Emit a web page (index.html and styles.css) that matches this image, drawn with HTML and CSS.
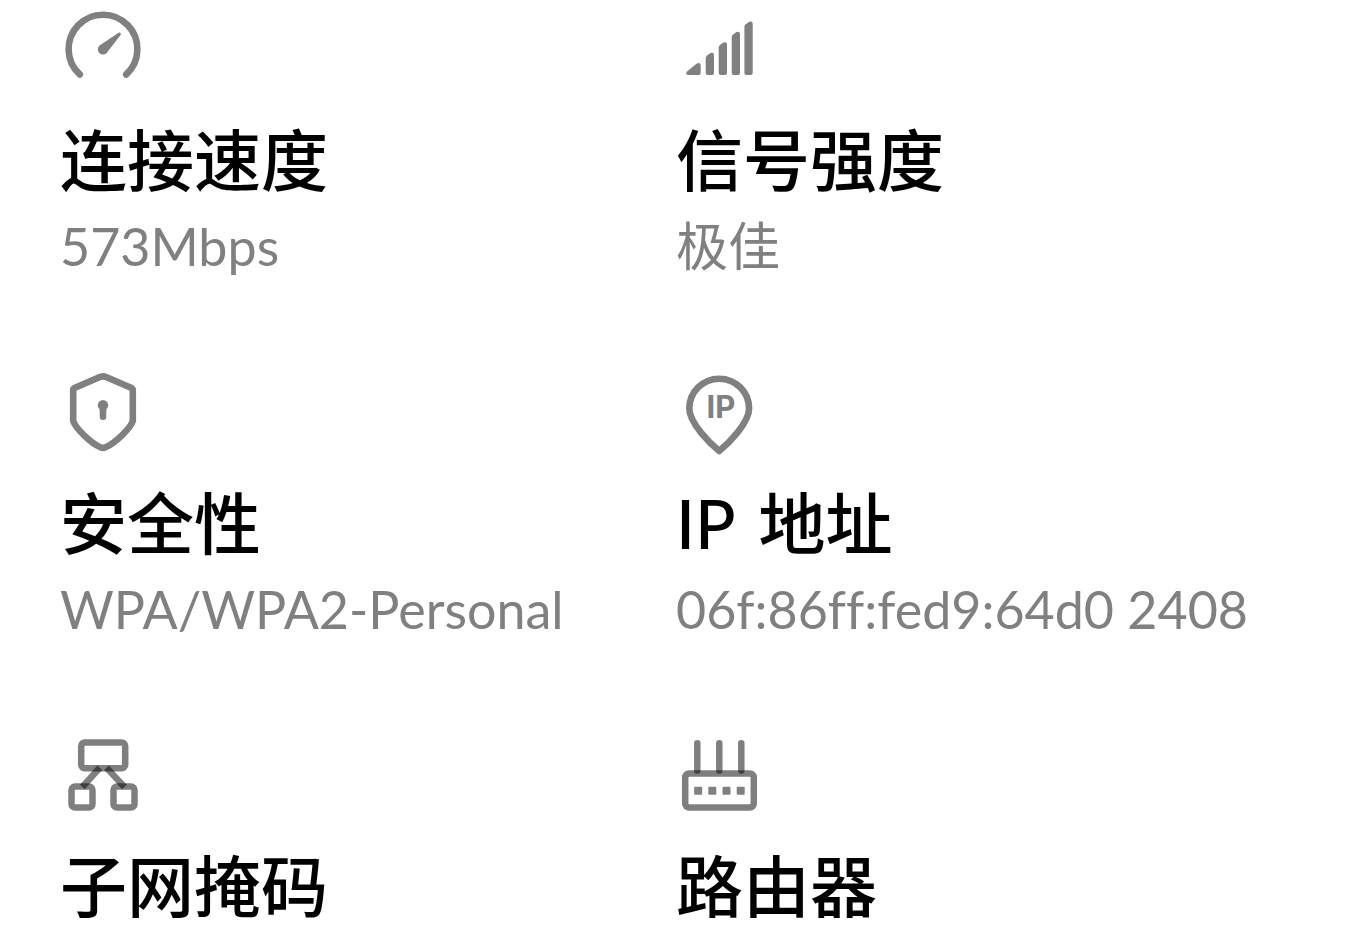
FILE: index.html
```html
<!DOCTYPE html>
<html lang="zh-CN">
<head>
<meta charset="utf-8">
<meta name="viewport" content="width=device-width, initial-scale=1">
<title>网络详情</title>
<link rel="stylesheet" href="styles.css">
</head>
<body>
<dl class="details">
  <div class="item">
    <svg class="icon" viewBox="0 0 84 84" aria-hidden="true">
      <path class="line" d="M19.800 70.500A34.400 34.400 0 1 1 66.200 70.500"/>
      <path class="solid" d="M58.500 28.700L39.500 41.500A5.200 5.200 0 1 0 46.700 49L60.800 30.800Q61 28 58.500 28.700Z"/>
    </svg>
    <dt class="label">连接速度</dt>
    <dd class="value">573Mbps</dd>
  </div>
  <div class="item">
    <svg class="icon" viewBox="0 0 84 84" aria-hidden="true">
      <path class="solid" d="M12 71Q9 70 11 67.500L20.500 59.700Q24.700 57.500 24.700 62V69Q24.700 71 22.700 71Z"/>
      <path class="solid" d="M29.700 69V54Q29.700 52.500 31 51.500L34.500 49Q38 47.800 38 51.500V69Q38 71 36 71H31.700Q29.700 71 29.700 69Z"/>
      <path class="solid" d="M42.700 69V43.500Q42.700 42 44 41L47.500 38.500Q51 37.300 51 41V69Q51 71 49 71H44.700Q42.700 71 42.700 69Z"/>
      <path class="solid" d="M55.700 69V33Q55.700 31.500 57 30.500L60.500 28Q64 26.800 64 30.500V69Q64 71 62 71H57.700Q55.700 71 55.700 69Z"/>
      <path class="solid" d="M68.400 69V22.700Q68.400 21.200 69.700 20.200L73.200 17.700Q76.700 16.500 76.700 20.200V69Q76.700 71 74.700 71H70.400Q68.400 71 68.400 69Z"/>
    </svg>
    <dt class="label">信号强度</dt>
    <dd class="value">极佳</dd>
  </div>
  <div class="item">
    <svg class="icon" viewBox="0 0 84 84" aria-hidden="true">
      <path class="line" d="M40.500 9.800Q43 8.900 45.500 9.800L71 20.800Q72.800 21.700 72.800 23.500V54C70 62 55 76 45.500 80.300Q43 81.500 40.500 80.300C31 76 16 62 13.200 54V23.500Q13.200 21.700 15 20.800Z"/>
      <circle class="solid" cx="43" cy="38.300" r="5.200"/>
      <path class="line" d="M43 40V49.700"/>
    </svg>
    <dt class="label">安全性</dt>
    <dd class="value">WPA/WPA2-Personal</dd>
  </div>
  <div class="item">
    <svg class="icon" viewBox="0 0 84 84" aria-hidden="true">
      <path class="line" d="M43.200 84C34 76.500 13.300 56 13.300 41.600A29.900 29.900 0 0 1 73.100 41.600C73.100 56 52.400 76.500 43.200 84Z"/>
      <text class="pin-text" x="45" y="51">IP</text>
    </svg>
    <dt class="label"><span class="latin">IP</span> 地址</dt>
    <dd class="value">06f:86ff:fed9:64d0 2408</dd>
  </div>
  <div class="item">
    <svg class="icon" viewBox="0 0 84 84" aria-hidden="true">
      <rect class="sheer" x="21.200" y="12.500" width="44" height="25.700" rx="3.500"/>
      <rect class="sheer" x="11.500" y="56.500" width="21" height="21" rx="3.500"/>
      <rect class="sheer" x="53.500" y="56.500" width="21" height="21" rx="3.500"/>
      <path class="sheer" d="M39.800 37.800L22.300 57"/>
      <path class="sheer" d="M46.500 37.800L64.500 57"/>
    </svg>
    <dt class="label">子网掩码</dt>
  </div>
  <div class="item">
    <svg class="icon" viewBox="0 0 84 84" aria-hidden="true">
      <rect class="sheer" x="9.200" y="43.500" width="68.600" height="34" rx="4"/>
      <path class="sheer round" d="M21.300 13.200V40.500"/>
      <path class="sheer round" d="M43.300 13.200V40.500"/>
      <path class="sheer round" d="M65.300 13.200V40.500"/>
      <rect class="solid" x="18.200" y="56.700" width="8" height="8" rx="1"/>
      <rect class="solid" x="32.300" y="56.700" width="8" height="8" rx="1"/>
      <rect class="solid" x="46.500" y="56.700" width="8" height="8" rx="1"/>
      <rect class="solid" x="60.700" y="56.700" width="8" height="8" rx="1"/>
    </svg>
    <dt class="label">路由器</dt>
  </div>
</dl>
</body>
</html>
```
FILE: styles.css
```css
body {
  margin: 0;
  background: #fff;
  font-family: Lato, "Noto Sans CJK SC", sans-serif;
  font-variant-ligatures: none;
  overflow: hidden;
}

.details {
  display: grid;
  grid-template-columns: 1fr 1fr;
  column-gap: 2px;
  row-gap: 85px;
  margin: 0;
  padding: 4px 61px 0 60px;
}

.item {
  min-width: 0;
}

.icon {
  display: block;
  width: 84px;
  height: 84px;
  overflow: visible;
}

.line {
  fill: none;
  stroke: #808080;
  stroke-width: 6.6;
  stroke-linecap: round;
  stroke-linejoin: round;
}

.solid {
  fill: #808080;
}

/* Translucent strokes, so that crossings come out darker */
.sheer {
  fill: none;
  stroke: rgba(0, 0, 0, 0.5);
  stroke-width: 6.5;
}

.round {
  stroke-linecap: round;
}

.pin-text {
  fill: #808080;
  font-family: Inter, sans-serif;
  font-size: 31px;
  font-weight: 700;
  text-anchor: middle;
}

.label {
  margin-top: 24px;
  font-size: 67px;
  line-height: 96px;
  font-weight: 500;
  color: #000;
  white-space: nowrap;
}

.latin {
  margin-right: 6px;
}

.value {
  margin: 2px 0 0;
  font-size: 52px;
  line-height: 72px;
  color: #808080;
  white-space: nowrap;
}
```
